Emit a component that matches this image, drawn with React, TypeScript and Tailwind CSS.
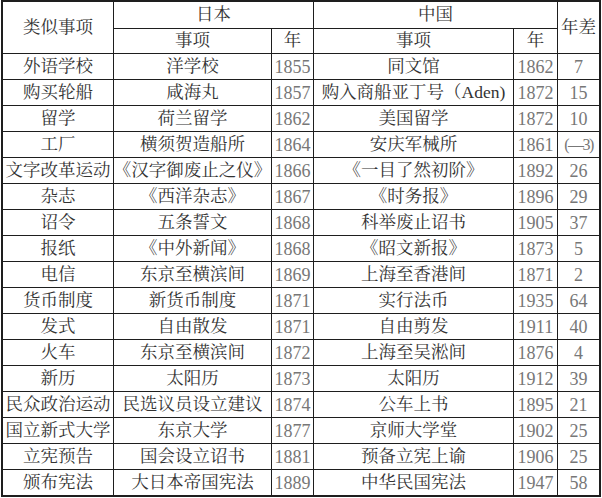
import React from "react"

const rows: [string, string, string, string, string, string][] = [
  ["外语学校", "洋学校", "1855", "同文馆", "1862", "7"],
  ["购买轮船", "咸海丸", "1857", "购入商船亚丁号（Aden)", "1872", "15"],
  ["留学", "荷兰留学", "1862", "美国留学", "1872", "10"],
  ["工厂", "横须贺造船所", "1864", "安庆军械所", "1861", "(—3)"],
  ["文字改革运动", "《汉字御废止之仪》", "1866", "《一目了然初阶》", "1892", "26"],
  ["杂志", "《西洋杂志》", "1867", "《时务报》", "1896", "29"],
  ["诏令", "五条誓文", "1868", "科举废止诏书", "1905", "37"],
  ["报纸", "《中外新闻》", "1868", "《昭文新报》", "1873", "5"],
  ["电信", "东京至横滨间", "1869", "上海至香港间", "1871", "2"],
  ["货币制度", "新货币制度", "1871", "实行法币", "1935", "64"],
  ["发式", "自由散发", "1871", "自由剪发", "1911", "40"],
  ["火车", "东京至横滨间", "1872", "上海至吴淞间", "1876", "4"],
  ["新历", "太阳历", "1873", "太阳历", "1912", "39"],
  ["民众政治运动", "民选议员设立建议", "1874", "公车上书", "1895", "21"],
  ["国立新式大学", "东京大学", "1877", "京师大学堂", "1902", "25"],
  ["立宪预告", "国会设立诏书", "1881", "预备立宪上谕", "1906", "25"],
  ["颁布宪法", "大日本帝国宪法", "1889", "中华民国宪法", "1947", "58"],
]

const cell = "bg-white flex items-center justify-center whitespace-nowrap overflow-visible"
const txt = "text-[#333] text-[17.5px]"
const num = "text-[#777] text-[18px]"

export default function App() {
  return (
    <div
      className="w-[602px] h-[498px] bg-white pl-px"
      style={{ fontFamily: '"Liberation Serif", "Noto Serif CJK SC", "Noto Sans CJK SC", serif' }}
    >
      <div className="grid w-[600px] grid-cols-[110px_157px_41px_199px_43px_41px] grid-rows-[26px_24px_repeat(17,25px)] gap-px bg-[#1e1e1e] border-2 border-[#1e1e1e] leading-none font-normal">
        <div className={`${cell} ${txt} row-span-2`}>类似事项</div>
        <div className={`${cell} ${txt} col-span-2`}>日本</div>
        <div className={`${cell} ${txt} col-span-2`}>中国</div>
        <div className={`${cell} ${txt} row-span-2`}>年差</div>
        <div className={`${cell} ${txt}`}>事项</div>
        <div className={`${cell} ${txt}`}>年</div>
        <div className={`${cell} ${txt}`}>事项</div>
        <div className={`${cell} ${txt}`}>年</div>
        {rows.map((r, i) => (
          <React.Fragment key={i}>
            <div className={`${cell} ${txt}`}>{r[0]}</div>
            <div className={`${cell} ${txt}`}>{r[1]}</div>
            <div className={`${cell} ${num}`}>{r[2]}</div>
            <div className={`${cell} ${txt}`}>{r[3]}</div>
            <div className={`${cell} ${num}`}>{r[4]}</div>
            {r[5].length > 3 ? (
              <div className={`${cell} text-[#777] text-[16px] tracking-[-1.5px]`}>{r[5]}</div>
            ) : (
              <div className={`${cell} ${num}`}>{r[5]}</div>
            )}
          </React.Fragment>
        ))}
      </div>
    </div>
  )
}
